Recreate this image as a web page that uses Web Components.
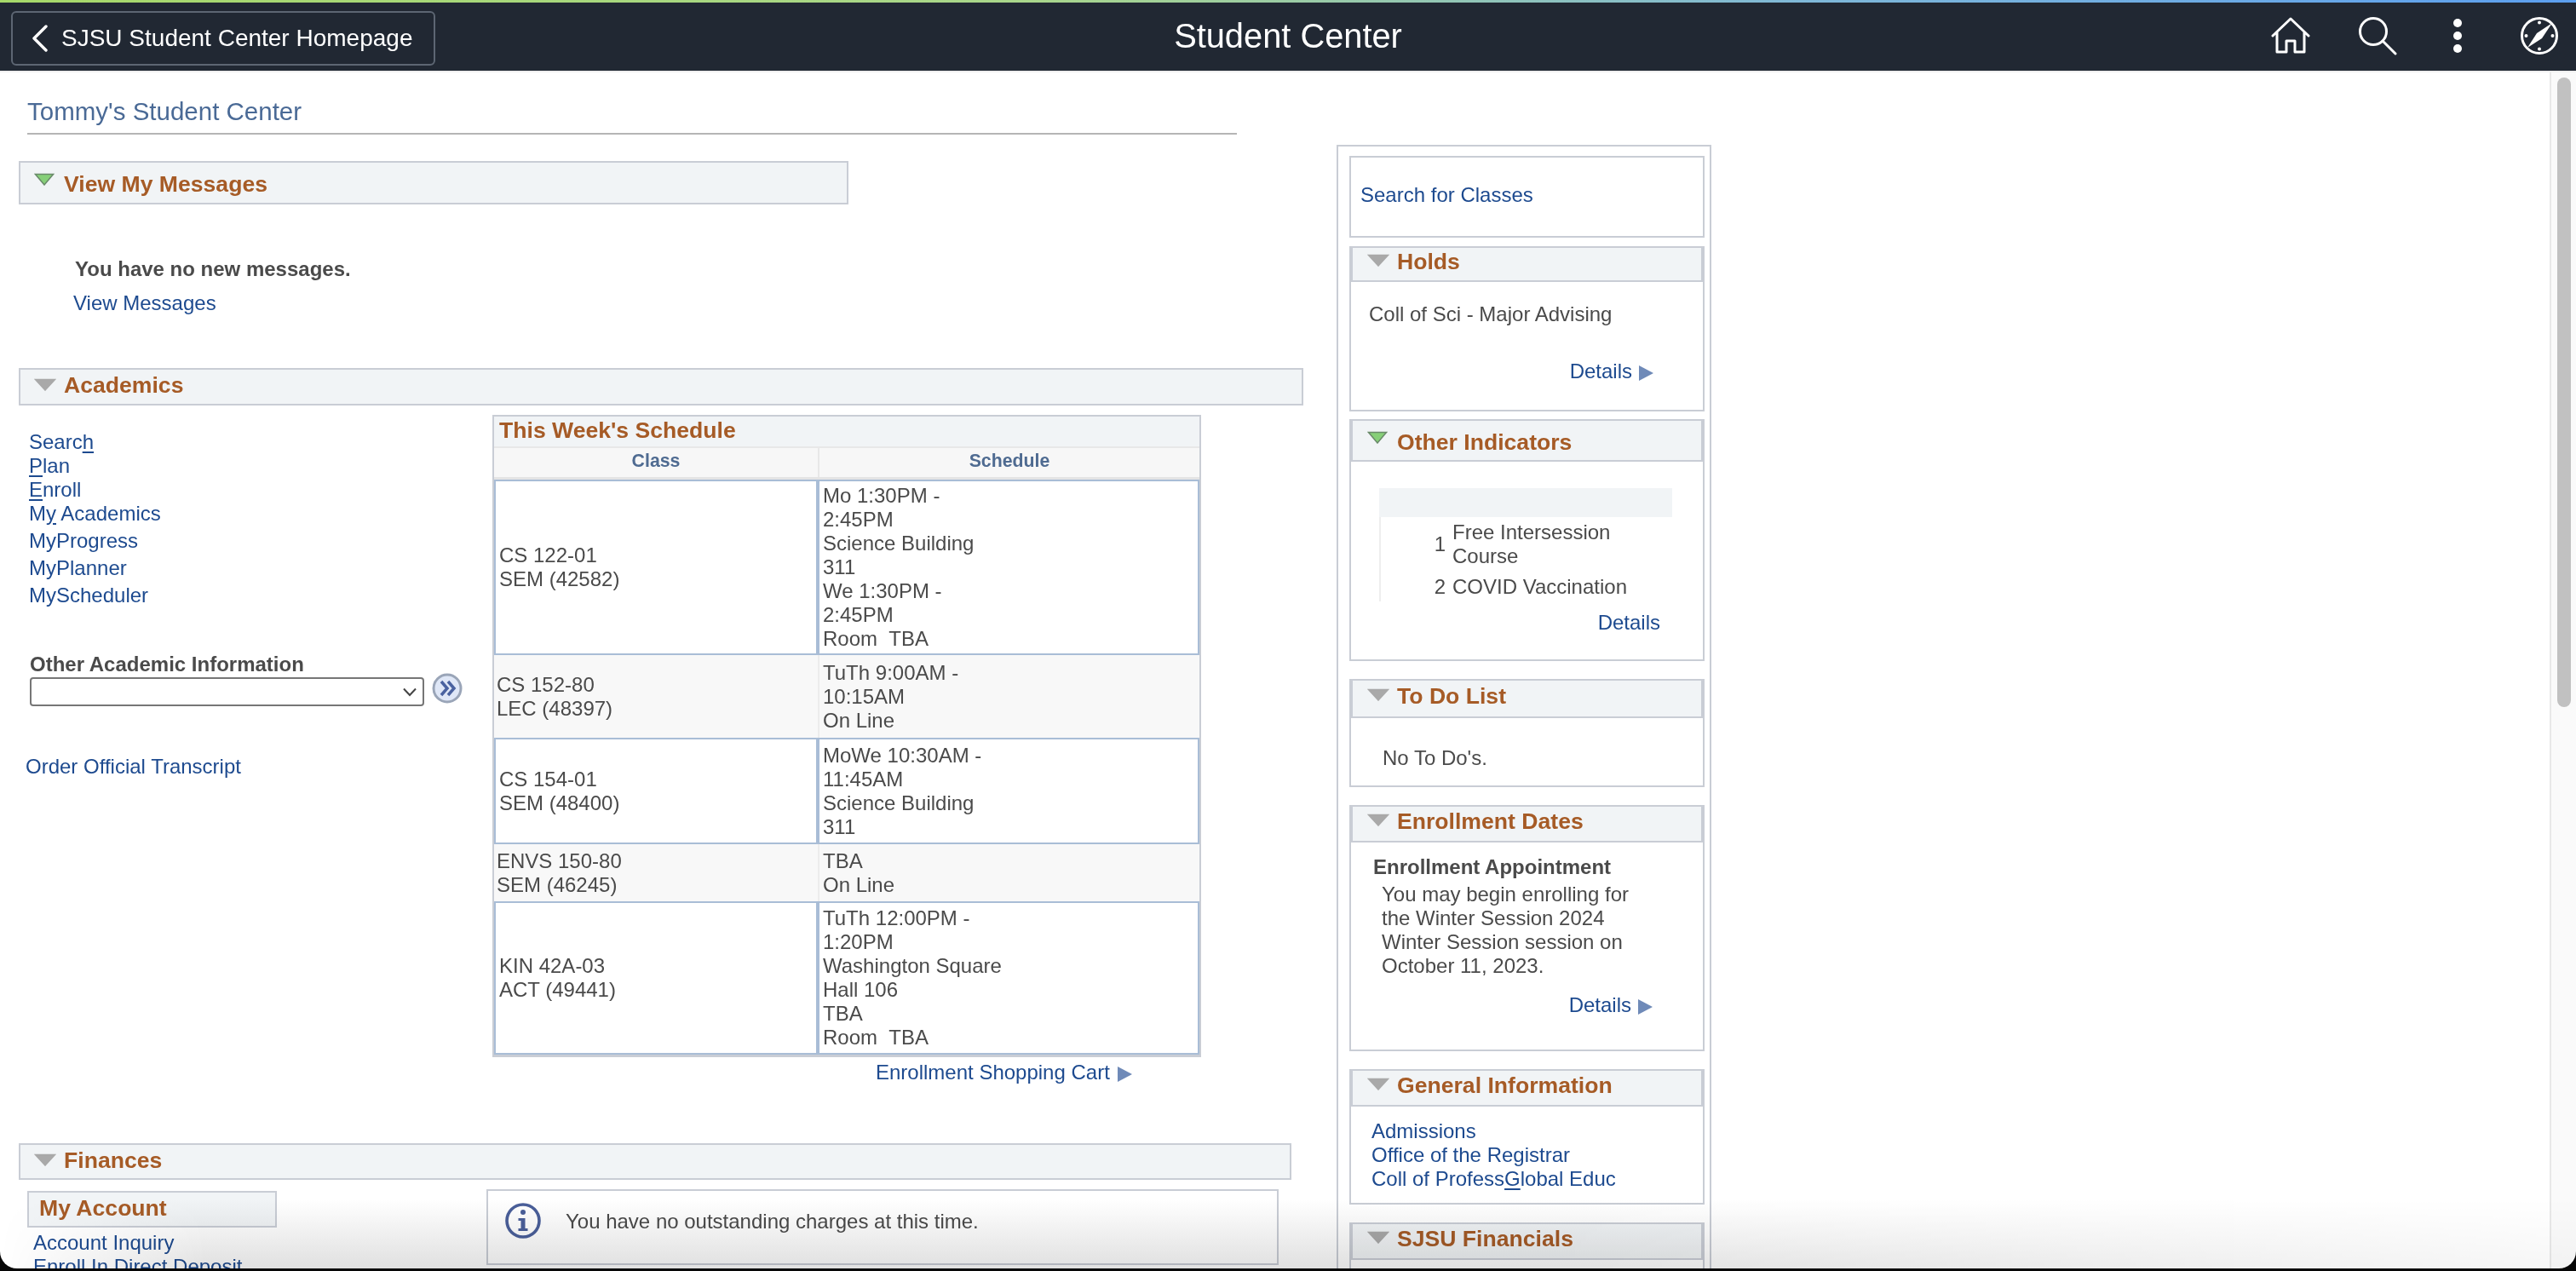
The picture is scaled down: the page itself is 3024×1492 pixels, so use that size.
<!DOCTYPE html>
<html lang="en">
<head>
<meta charset="utf-8">
<title>Student Center</title>
<style>
  html, body { margin: 0; height: 100%; overflow: hidden; background: #fff; }
  body { font: 24px/28px "Liberation Sans", Arial, sans-serif; color: #4a4a4a; }
</style>
</head>
<body>
<sc-shell>
  <sc-header slot="header" back="SJSU Student Center Homepage" heading="Student Center"></sc-header>

  <sc-page-title>Tommy's Student Center</sc-page-title>

  <div slot="left" style="display:contents">
    <sc-section label="View My Messages" open style="width:974px;--h:51px;--mb:57px">
      <sc-messages></sc-messages>
    </sc-section>
    <sc-section label="Academics" style="width:1508px;--h:44px;--mb:8px">
      <sc-academics></sc-academics>
    </sc-section>
    <sc-section label="Finances" style="width:1494px;--h:43px;--mb:11px">
      <sc-finances></sc-finances>
    </sc-section>
  </div>

  <sc-sidebar slot="right"></sc-sidebar>
</sc-shell>

<script>
const LINK = '#1d4a8f';
const BROWN = '#a65b26';

function triangle(open) {
  const fill = open ? '#86cf78' : '#a9a9a9';
  const stroke = open ? '#6a8a6a' : '#a9a9a9';
  const w = open ? 24 : 26;
  return `<svg width="${w}" height="15" viewBox="0 0 ${w} 15"><path d="M1.5 1.5H${w - 1.5}L${w / 2} 14Z" fill="${fill}" stroke="${stroke}" stroke-width="1.5"/></svg>`;
}
const ARROW = `<svg width="17" height="20" viewBox="0 0 17 20"><path d="M0 1L17 10L0 19Z" fill="#6f8ab8"/></svg>`;

class ScShell extends HTMLElement {
  constructor() {
    super();
    this.attachShadow({ mode: 'open' }).innerHTML = `
      <style>
        :host { display: flex; flex-direction: column; height: 1492px; position: relative; overflow: hidden; }
        .body { flex: 1; display: flex; min-height: 0; border-top: 2px solid #efefef; }
        .main { width: 2993px; flex: none; padding: 0 0 0 22px; box-sizing: border-box; overflow: hidden; }
        .cols { display: flex; }
        .left { width: 1547px; flex: none; padding-top: 31px; }
        .right { margin-top: 12px; }
        .bar { flex: 1; border-left: 2px solid #e8e8e8; background: #fafafa; padding: 6px 0 0 7px; }
        .thumb { width: 16px; height: 739px; background: #c1c1c1; border-radius: 8px; }
        .fade { position: absolute; left: 0; right: 0; bottom: 3px; height: 108px; pointer-events: none; mix-blend-mode: multiply;
                background: linear-gradient(#fff 25%, #e0e0e0);
                -webkit-mask-image: linear-gradient(90deg, transparent, #000 8%, #000 60%, rgba(0,0,0,.25) 100%); }
        .edge { position: absolute; left: 0; right: 0; bottom: 0; height: 26px; overflow: hidden; pointer-events: none; }
        .edge div { position: absolute; left: 0; right: 0; top: -40px; bottom: 3px; border-radius: 20px; box-shadow: 0 0 0 40px #060606; }
      </style>
      <slot name="header"></slot>
      <div class="body">
        <div class="main">
          <slot></slot>
          <div class="cols">
            <div class="left"><slot name="left"></slot></div>
            <div class="right"><slot name="right"></slot></div>
          </div>
        </div>
        <div class="bar"><div class="thumb"></div></div>
      </div>
      <div class="fade"></div>
      <div class="edge"><div></div></div>`;
  }
}

class ScHeader extends HTMLElement {
  constructor() {
    super();
    this.attachShadow({ mode: 'open' }).innerHTML = `
      <style>
        :host { display: block; }
        .strip { height: 3px; background: linear-gradient(90deg, #a6d96a, #a9d68b 40%, #7fb8d8 70%, #5c9fef); }
        .bar { height: 80px; background: #212833; display: grid; grid-template-columns: 1fr auto 1fr; align-items: center; color: #fff; }
        .back { justify-self: start; display: flex; align-items: center; gap: 15px; height: 64px; width: 498px; box-sizing: border-box; margin: 4px 0 0 13px;
                border: 2px solid #5d6673; border-radius: 6px; padding: 0 0 0 22px; font-size: 28px; }
        .title { font-size: 39.8px; margin-top: -2px; }
        .icons { justify-self: end; display: flex; align-items: center; margin-top: -2px; }
        svg { display: block; }
        .icons svg { fill: none; stroke: #fff; stroke-width: 3; stroke-linecap: round; stroke-linejoin: round; }
      </style>
      <div class="strip"></div>
      <div class="bar">
        <div class="back">
          <svg width="20" height="32" viewBox="0 0 20 32" fill="none" stroke="#fff" stroke-width="3.4" stroke-linecap="round" stroke-linejoin="round"><path d="M17 2L3 16L17 30"/></svg>
          <span id="b"></span>
        </div>
        <div class="title" id="t"></div>
        <div class="icons">
          <svg width="46" height="44" viewBox="0 0 46 44" style="margin-right:56px"><path d="M2 22L23 2L44 22M7 18V41H18V28H28V41H39V18"/></svg>
          <svg width="46" height="46" viewBox="0 0 46 46" style="margin-right:65px"><circle cx="18" cy="18" r="15.5"/><path d="M29 29L44 44"/></svg>
          <svg width="12" height="42" viewBox="0 0 12 42" style="margin-right:67px"><g fill="#fff" stroke="none"><circle cx="6" cy="6" r="5"/><circle cx="6" cy="21" r="5"/><circle cx="6" cy="36" r="5"/></g></svg>
          <svg width="46" height="46" viewBox="0 0 46 46" style="margin-right:20px"><circle cx="23" cy="23" r="20.5"/><path d="M9 37L20 20L38 8L26 26Z" fill="#fff" stroke="none"/><g fill="#fff" stroke="none"><circle cx="23" cy="7.5" r="2"/><circle cx="23" cy="38.5" r="2"/><circle cx="7.5" cy="23" r="2"/><circle cx="38.5" cy="23" r="2"/></g></svg>
        </div>
      </div>`;
    this.shadowRoot.getElementById('b').textContent = this.getAttribute('back');
    this.shadowRoot.getElementById('t').textContent = this.getAttribute('heading');
  }
}

class ScPageTitle extends HTMLElement {
  constructor() {
    super();
    this.attachShadow({ mode: 'open' }).innerHTML = `
      <style>
        :host { display: block; width: 1420px; margin: 28px 0 0 10px; padding: 0 0 7px; border-bottom: 2px solid #b5b5b5;
                font-size: 29.5px; line-height: 36px; color: #4a6a96; }
      </style><slot></slot>`;
  }
}

class ScSection extends HTMLElement {
  constructor() {
    super();
    const open = this.hasAttribute('open');
    this.attachShadow({ mode: 'open' }).innerHTML = `
      <style>
        :host { display: block; margin-bottom: var(--mb, 0); }
        .head { height: var(--h, 44px); box-sizing: border-box; background: #f1f4f6; border: 2px solid #c9cdd5;
                display: flex; align-items: center; gap: ${open ? 11 : 9}px; padding-left: 16px;
                font-weight: bold; font-size: 26.6px; color: ${BROWN}; }
        .head svg { display: block; margin-top: ${open ? -8 : -5}px; }
        .head span { margin-top: ${open ? 3 : -4}px; }
      </style>
      <div class="head">${triangle(open)}<span>${this.getAttribute('label')}</span></div>
      <slot></slot>`;
  }
}

class ScMessages extends HTMLElement {
  constructor() {
    super();
    this.attachShadow({ mode: 'open' }).innerHTML = `
      <style>
        :host { display: block; height: 135px; padding: 0 0 0 66px; position: relative; }
        b { display: block; padding-top: 62px; line-height: 28px; }
        a { display: block; margin: 12px 0 0 -2px; color: ${LINK}; }
      </style>
      <b>You have no new messages.</b>
      <a>View Messages</a>`;
  }
}

class ScAcademics extends HTMLElement {
  constructor() {
    super();
    this.attachShadow({ mode: 'open' }).innerHTML = `
      <style>
        :host { display: flex; height: 858px; }
        .nav { width: 556px; flex: none; padding: 29px 0 0 12px; box-sizing: border-box; color: ${LINK}; }
        .nav a { display: block; height: 28px; }
        .nav a.my { height: 32px; }
        u { text-underline-offset: 3px; }
        .other { margin: 50px 0 0 1px; color: #4a4a4a; font-weight: bold; line-height: 26px; }
        .pick { display: flex; align-items: center; gap: 9px; margin: 2px 0 0 1px; }
        .select { width: 463px; height: 34px; box-sizing: border-box; border: 2px solid #767676; border-radius: 4px; display: flex; justify-content: flex-end; align-items: center; padding-right: 6px; }
        .order { display: block; margin: 57px 0 0 -4px; }
      </style>
      <div class="nav">
        <a>Searc<u>h</u></a>
        <a><u>P</u>lan</a>
        <a><u>E</u>nroll</a>
        <a class="my">M<u>y</u> Academics</a>
        <a class="my">MyProgress</a>
        <a class="my">MyPlanner</a>
        <a class="my">MyScheduler</a>
        <div class="other">Other Academic Information</div>
        <div class="pick">
          <div class="select"><svg width="18" height="11" viewBox="0 0 18 11" fill="none" stroke="#444" stroke-width="2"><path d="M2 1.5L9 9L16 1.5"/></svg></div>
          <svg width="36" height="36" viewBox="0 0 36 36" style="margin-top:-8px"><circle cx="18" cy="18" r="16" fill="#dfe7f7" stroke="#9aa5b8" stroke-width="3"/><path d="M11 10L18 18L11 26M19 10L26 18L19 26" fill="none" stroke="#4a62a0" stroke-width="3.5"/></svg>
        </div>
        <a class="order">Order Official Transcript</a>
      </div>
      <div><sc-schedule></sc-schedule></div>`;
  }
}

class ScSchedule extends HTMLElement {
  constructor() {
    super();
    const rows = [
      ['CS 122-01<br>SEM (42582)', 'Mo 1:30PM -<br>2:45PM<br>Science Building<br>311<br>We 1:30PM -<br>2:45PM<br>Room &nbsp;TBA', 206, 1],
      ['CS 152-80<br>LEC (48397)', 'TuTh 9:00AM -<br>10:15AM<br>On Line', 97, 0],
      ['CS 154-01<br>SEM (48400)', 'MoWe 10:30AM -<br>11:45AM<br>Science Building<br>311', 125, 1],
      ['ENVS 150-80<br>SEM (46245)', 'TBA<br>On Line', 67, 0],
      ['KIN 42A-03<br>ACT (49441)', 'TuTh 12:00PM -<br>1:20PM<br>Washington Square<br>Hall 106<br>TBA<br>Room &nbsp;TBA', 180, 1],
    ];
    this.attachShadow({ mode: 'open' }).innerHTML = `
      <style>
        :host { display: block; width: 832px; margin-top: 11px; }
        .wrap { border: 2px solid #c9cdd5; border-width: 2px 2px 3px; }
        .cap { height: 35px; background: #f1f4f6; font-weight: bold; font-size: 26.6px; line-height: 33px; color: ${BROWN}; padding-left: 6px; }
        .hd { display: grid; grid-template-columns: 380px 1fr; height: 34px; background: #f7f7f7; border-top: 2px solid #e8e8e8; border-bottom: 3px solid #e4e4e4; font-weight: bold; font-size: 21.3px; line-height: 30px; color: #4f6b91; text-align: center; }
        .hd div + div { border-left: 2px solid #e8e8e8; }
        .row { display: grid; grid-template-columns: 380px 1fr; align-items: stretch; box-sizing: border-box; }
        .row div { display: flex; align-items: center; padding-left: 4px; box-sizing: border-box; }
        .row.on div { background: #fff; border: 2px solid #a9bdd6; }
        .row.off div { background: #f8f8f8; padding-left: 3px; }
        .row.off div + div { border-left: 2px solid #ececec; padding-left: 4px; }
      </style>
      <div class="wrap">
        <div class="cap">This Week's Schedule</div>
        <div class="hd"><div>Class</div><div>Schedule</div></div>
        ${rows.map(r => `<div class="row ${r[3] ? 'on' : 'off'}" style="height:${r[2]}px"><div><span>${r[0]}</span></div><div><span>${r[1]}</span></div></div>`).join('')}
      </div>
      <sc-more style="margin:4px 0 0 450px">Enrollment Shopping Cart</sc-more>`;
  }
}

class ScMore extends HTMLElement {
  constructor() {
    super();
    this.attachShadow({ mode: 'open' }).innerHTML = `
      <style>
        :host { display: flex; align-items: center; gap: 9px; color: ${LINK}; }
        svg { margin-top: 4px; }
      </style>
      <slot></slot>${ARROW}`;
  }
}

class ScFinances extends HTMLElement {
  constructor() {
    super();
    this.attachShadow({ mode: 'open' }).innerHTML = `
      <style>
        :host { display: flex; height: 120px; align-items: flex-start; color: ${LINK}; }
        .acct { width: 293px; margin: 13px 0 0 10px; flex: none; }
        .cap { height: 43px; box-sizing: border-box; background: #f1f4f6; border: 2px solid #c9cdd5; font-weight: bold; font-size: 26.6px; line-height: 37px; color: ${BROWN}; padding-left: 12px; }
        a { display: block; margin-left: 7px; }
        .acct a:first-of-type { margin-top: 4px; }
        .info { width: 930px; height: 89px; margin: 11px 0 0 246px; box-sizing: border-box; border: 2px solid #c9cdd5; display: flex; align-items: flex-start; padding: 14px 0 0 20px; gap: 29px; color: #4a4a4a; }
        .info span { line-height: 44px; }
      </style>
      <div class="acct">
        <div class="cap">My Account</div>
        <a>Account Inquiry</a>
        <a>Enroll In Direct Deposit</a>
      </div>
      <div class="info">
        <svg width="42" height="42" viewBox="0 0 42 42"><circle cx="21" cy="21" r="19" fill="#fff" stroke="#4a5f9a" stroke-width="3.6"/><circle cx="21" cy="11" r="3" fill="#4a5f9a"/><path d="M15.5 18H23.5V30H26.5V33H15.5V30H18.5V21H15.5Z" fill="#4a5f9a"/></svg>
        <span>You have no outstanding charges at this time.</span>
      </div>`;
  }
}

class ScPagelet extends HTMLElement {
  constructor() {
    super();
    const open = this.hasAttribute('open');
    const label = this.getAttribute('label');
    this.attachShadow({ mode: 'open' }).innerHTML = `
      <style>
        :host { display: block; box-sizing: border-box; border: 2px solid #c9cdd5; }
        .head { height: var(--hh, 40px); box-sizing: border-box; background: #f1f4f6; border-bottom: 2px solid #c9cdd5; border-left: 2px solid #c9cdd5; border-right: 2px solid #c9cdd5;
                display: flex; align-items: center; gap: ${open ? 11 : 9}px; padding-left: 17px; font-weight: bold; font-size: 26.6px; color: ${BROWN}; }
        .head svg { margin-top: ${open ? -8 : -10}px; display: block; }
        .head span { margin-top: ${open ? 4 : -6}px; }
      </style>
      ${label ? `<div class="head">${triangle(open)}<span>${label}</span></div>` : ''}
      <slot></slot>`;
  }
}

class ScSidebar extends HTMLElement {
  constructor() {
    super();
    this.attachShadow({ mode: 'open' }).innerHTML = `
      <style>
        :host { display: block; width: 440px; height: 1340px; box-sizing: border-box; border: 2px solid #c9cdd5; border-bottom: 0; padding: 11px 6px 0 13px; color: #4a4a4a; }
        sc-pagelet { margin-bottom: 10px; }
        a { color: ${LINK}; display: block; }
        .end { text-align: right; }
        .details { display: flex; gap: 8px; align-items: center; justify-content: flex-end; color: ${LINK}; }
        .details svg { margin-top: 4px; }
        u { text-underline-offset: 3px; }
      </style>
      <sc-pagelet style="height:96px"><a style="padding:30px 0 0 11px">Search for Classes</a></sc-pagelet>

      <sc-pagelet label="Holds" style="height:194px;--hh:40px;margin-bottom:9px">
        <div style="padding:24px 0 0 21px">Coll of Sci - Major Advising</div>
        <div class="details" style="padding:39px 58px 0 0">Details ${ARROW}</div>
      </sc-pagelet>

      <sc-pagelet label="Other Indicators" open style="height:284px;--hh:48px;margin-bottom:21px">
        <div style="margin:31px 36px 0 33px;height:133px;border-left:2px solid #eee">
          <div style="height:34px;background:#f1f4f6;margin-left:-2px"></div>
          <div style="display:grid;grid-template-columns:76px 1fr;column-gap:8px;line-height:28px;padding-top:4px">
            <div style="text-align:right;align-self:center">1</div><div>Free Intersession<br>Course</div>
            <div style="text-align:right;margin-top:8px">2</div><div style="margin-top:8px">COVID Vaccination</div>
          </div>
        </div>
        <a class="end" style="padding:11px 50px 0 0">Details</a>
      </sc-pagelet>

      <sc-pagelet label="To Do List" style="height:127px;--hh:44px;margin-bottom:21px">
        <div style="padding:33px 0 0 37px">No To Do's.</div>
      </sc-pagelet>

      <sc-pagelet label="Enrollment Dates" style="height:289px;--hh:42px;margin-bottom:21px">
        <b style="display:block;padding:15px 0 0 26px">Enrollment Appointment</b>
        <div style="padding:4px 0 0 36px;width:340px;box-sizing:border-box">You may begin enrolling for the Winter Session 2024 Winter Session session on October 11, 2023.</div>
        <div class="details" style="padding:18px 59px 0 0">Details ${ARROW}</div>
      </sc-pagelet>

      <sc-pagelet label="General Information" style="height:159px;--hh:42px;margin-bottom:21px">
        <div style="padding:15px 0 0 24px">
          <a>Admissions</a>
          <a>Office of the Registrar</a>
          <a>Coll of Profess<u>G</u>lobal Educ</a>
        </div>
      </sc-pagelet>

      <sc-pagelet label="SJSU Financials" style="height:200px;--hh:42px"></sc-pagelet>`;
  }
}

customElements.define('sc-shell', ScShell);
customElements.define('sc-header', ScHeader);
customElements.define('sc-page-title', ScPageTitle);
customElements.define('sc-section', ScSection);
customElements.define('sc-messages', ScMessages);
customElements.define('sc-academics', ScAcademics);
customElements.define('sc-schedule', ScSchedule);
customElements.define('sc-more', ScMore);
customElements.define('sc-finances', ScFinances);
customElements.define('sc-pagelet', ScPagelet);
customElements.define('sc-sidebar', ScSidebar);
</script>
</body>
</html>
